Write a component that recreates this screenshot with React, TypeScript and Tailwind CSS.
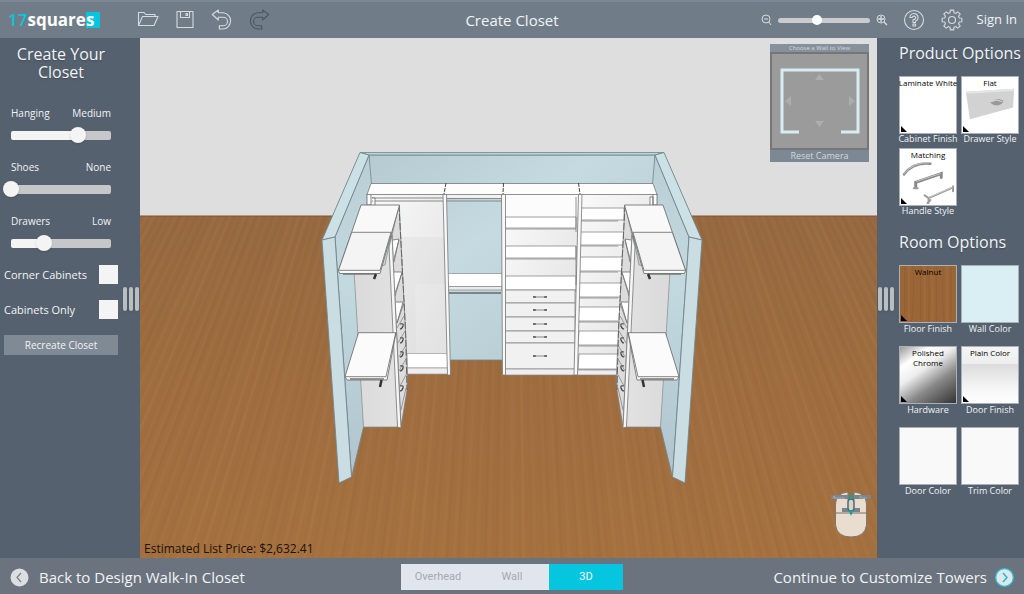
import { useState, type ReactNode } from 'react';
import clsx from 'clsx';

const floorLines = Array.from({ length: 420 }, (_, i) => ({
    x: -340 + i * 4,
    opacity: [0.04, 0.02, 0.07, 0.03, 0.01, 0.05, 0.02][(i * 5 + (i % 11)) % 7],
    color: i % 3 === 0 ? '#d8a066' : '#5f3c1c',
}));

const drawers = [
    { y: 290, h: 13, pull: 297 },
    { y: 303, h: 14, pull: 310 },
    { y: 317, h: 14, pull: 324 },
    { y: 331, h: 12, pull: 337 },
    { y: 343, h: 26, pull: 356 },
];

const towerShelves = [
    [217, 228],
    [246, 258],
    [276, 290],
];

const rightShelves = [
    [208, 220],
    [232, 245],
    [257, 271],
    [283, 297],
    [307, 321],
    [331, 345],
    [354, 369],
];

function WingWall() {
    return <path d="M335 237L369 155L372 190L380 427H363.5L351.5 477Z" fill="url(#innerWall)" stroke="#71868c" strokeWidth=".8" />;
}

function Wing() {
    return (
        <g strokeLinejoin="round">
            <path d="M354 271L385 265L391 236L398 427H363.5Z" fill="url(#sidePanel)" stroke="#888" strokeWidth=".7" />
            <path d="M399 205L405 320L407.5 372L407 390L401 427L392 235Z" fill="#dcdcdc" stroke="#777" strokeWidth=".7" />
            <path d="M393 240L399 239L394 262M394 272H402L395 296M396 302H403L397 323" fill="#fff" stroke="#6b6b6b" strokeWidth=".8" />
            <path d="M397 323L404 303M394 296L402 273M393 262L399 240" stroke="#777" strokeWidth=".8" />
            <path d="M397 328L404 316M398 343L405 331M399 357L406 345M399 371L406 359M400 386L407 373M401 410L406 388" stroke="#888" strokeWidth=".8" />
            <path d="M389 247L392 235L401 428L397.5 427Z" fill="#f6f6f6" stroke="#777" strokeWidth=".8" />
            <path d="M399 205L405.5 330L407 390" fill="none" stroke="#666" strokeWidth="1" strokeDasharray="7 2" />
            {[326, 340, 354, 368, 388].map((y) => (
                <path key={y} d={`M400 ${y - 2}q4 -1 3 2t-3 3`} fill="none" stroke="#444" strokeWidth="1.2" />
            ))}
            <path d="M361 205H399.5L380 273.5H339.5L338.5 270.5Z" fill="#f9f9f9" stroke="#666" strokeWidth=".8" />
            <path d="M351.7 232.3H391L380 270.3H338.5Z" fill="#f4f4f4" stroke="#666" strokeWidth=".8" />
            <path d="M343 274H376" stroke="#777" strokeWidth="1.5" />
            <path d="M376 274L374 279" stroke="#333" strokeWidth="2.5" />
            <path d="M358.5 332.7H396L387 380H347L345 376.7Z" fill="#fbfbfb" stroke="#666" strokeWidth=".8" />
            <path d="M345 376.7H386L395.7 333" fill="none" stroke="#666" strokeWidth=".8" />
            <path d="M350 379H384" stroke="#777" strokeWidth="1.5" />
            <path d="M381.5 380L380 387" stroke="#333" strokeWidth="2.5" />
            <path d="M360 152.5L369 155L335 237L322 240Z" fill="#cbe1e6" stroke="#71868c" strokeWidth=".9" />
            <path d="M322 240L335 237L351.5 477L339 483Z" fill="#c9dde2" stroke="#71868c" strokeWidth=".9" />
        </g>
    );
}

function ClosetScene() {
    return (
        <svg className="absolute inset-0 h-full w-full" viewBox="140 38 737 520" preserveAspectRatio="xMidYMid slice" aria-hidden="true">
            <defs>
                <linearGradient id="floor" x1="0" y1="216" x2="0" y2="560" gradientUnits="userSpaceOnUse">
                    <stop offset="0" stopColor="#996b42" />
                    <stop offset="1" stopColor="#a67240" />
                </linearGradient>
                <linearGradient id="backWall" x1="0" y1="0" x2="1" y2="1">
                    <stop offset="0" stopColor="#b5cad1" />
                    <stop offset=".4" stopColor="#c5dbe1" />
                    <stop offset="1" stopColor="#b0c6cd" />
                </linearGradient>
                <linearGradient id="innerWall" x1="0" y1="0" x2="0" y2="1">
                    <stop offset="0" stopColor="#b9ced5" />
                    <stop offset=".4" stopColor="#c3d9e0" />
                    <stop offset="1" stopColor="#afc4cc" />
                </linearGradient>
                <linearGradient id="sidePanel" x1="0" y1="0" x2="1" y2="0">
                    <stop offset="0" stopColor="#dadada" />
                    <stop offset="1" stopColor="#e2e2e2" />
                </linearGradient>
                <linearGradient id="backPanel" x1="0" y1="0" x2="1" y2="1">
                    <stop offset="0" stopColor="#fafafa" />
                    <stop offset="1" stopColor="#dfdfdf" />
                </linearGradient>
                <clipPath id="floorClip">
                    <rect x="-300" y="216" width="1600" height="800" />
                </clipPath>
            </defs>

            <rect x="-300" y="-400" width="1600" height="620" fill="#dedede" />
            <rect x="-300" y="216" width="1600" height="800" fill="url(#floor)" />
            <g clipPath="url(#floorClip)">
                {floorLines.map((line) => (
                    <path key={line.x} d={`M512 -450L${line.x} 600`} stroke={line.color} strokeOpacity={line.opacity} strokeWidth="3" />
                ))}
            </g>
            <path d="M-300 216H1300" stroke="#7c5637" />

            {/* walls */}
            <path d="M369 155H655L651 360H373Z" fill="url(#backWall)" stroke="#71868c" strokeWidth=".8" />
            <path d="M360 152.5H664L655 155H369Z" fill="#b9d3da" stroke="#71868c" strokeWidth=".8" />
            <WingWall />
            <g transform="translate(1024 0) scale(-1 1)">
                <WingWall />
            </g>

            {/* hanging section */}
            <path d="M368 195H444L449 374H407L400 205H368Z" fill="url(#backPanel)" />
            <path d="M396 237H446L449 353H405Z" fill="#d4d4d4" fillOpacity=".25" />
            <path d="M415 284H447L449 353H416Z" fill="#fff" fillOpacity=".15" />
            <path d="M407 353.5H448V368H407Z" fill="#fff" stroke="#999" strokeWidth=".7" />
            <path d="M407 368H448V374H407Z" fill="#eee" stroke="#999" strokeWidth=".7" />
            <path d="M372 198H443M372 201H443" stroke="#888" strokeWidth="1.2" />
            <path d="M367 194H371V205H367ZM372 198h3v7" fill="#fff" stroke="#666" strokeWidth=".8" />

            {/* double hang */}
            <path d="M446 194H502V199H446Z" fill="#f2f2f2" />
            <path d="M446 198.5H502M446 201H502" stroke="#888" strokeWidth="1.2" />
            <path d="M447 273.5H502V286.5H447Z" fill="#fff" stroke="#888" strokeWidth=".7" />
            <path d="M447 286.5H502V290H447Z" fill="#e9e9e9" stroke="#888" strokeWidth=".7" />
            <path d="M449 293H501" stroke="#78868a" strokeWidth="2" />

            {/* drawer tower */}
            <path d="M505 194H579L575 375H505Z" fill="url(#backPanel)" />
            <path d="M505 195H578V217H505Z" fill="#fcfcfc" />
            {towerShelves.map(([top, front]) => (
                <g key={top} stroke="#888" strokeWidth=".8">
                    <path d={`M505 ${top}H576V${front}H505Z`} fill="#fff" />
                    <path d={`M505 ${front + 1}H576`} />
                </g>
            ))}
            {drawers.map((d) => (
                <g key={d.y}>
                    <rect x="505" y={d.y} width="70" height={d.h} fill="#f1f1f1" stroke="#888" strokeWidth=".8" />
                    <path d={`M533 ${d.pull}h3m8 0h3`} stroke="#444" strokeWidth="1.6" />
                    <path d={`M535 ${d.pull}h10`} stroke="#888" strokeWidth="1" />
                </g>
            ))}
            <path d="M505 369H575V375H505Z" fill="#eee" stroke="#888" strokeWidth=".7" />

            {/* shoe shelves */}
            <path d="M581 194H656V205L625 210L617 375H576Z" fill="url(#backPanel)" />
            {rightShelves.map(([top, front]) => (
                <g key={top} stroke="#888" strokeWidth=".8">
                    <path d={`M579 ${top}H624L${625 - (front - 200) / 24} ${front}H578Z`} fill="#fff" />
                    <path d={`M578 ${front + 1}H618`} />
                </g>
            ))}
            <path d="M577 370H620V375H577Z" fill="#eee" stroke="#888" strokeWidth=".7" />
            <path d="M650 205v-8h3v8M653 194h4v11h-4z" fill="#fff" stroke="#666" strokeWidth=".8" />

            {/* posts and top */}
            <g fill="#f9f9f9" stroke="#777" strokeWidth=".8">
                <path d="M443 194H446.5L450.5 375H447.5Z" />
                <path d="M501.5 194H505.5V375H502.5Z" />
                <path d="M578.5 194H582L577.5 375H574Z" />
                <path d="M576 197V232M576 246V285" fill="none" />
            </g>
            <path d="M371 183.5H653L657 194.5H367Z" fill="#fdfdfd" stroke="#777" strokeWidth=".8" />
            <path d="M446 183L444 194M503.5 183L503 194M578.5 183L580 194" stroke="#444" strokeWidth="1" strokeDasharray="4 1" />

            <Wing />
            <g transform="translate(1024 0) scale(-1 1)">
                <Wing />
            </g>
        </svg>
    );
}

function HeaderIcon({ label, disabled, children }: { label: string; disabled?: boolean; children: ReactNode }) {
    return (
        <button type="button" aria-label={label} className={clsx('flex w-5 justify-center', disabled ? 'text-[#50565c]' : 'text-[#d5dade]')}>
            <svg className="h-[22px] w-[22px] shrink-0" viewBox="0 0 22 22" fill="none" stroke="currentColor" strokeWidth="1.1" strokeLinejoin="round" strokeLinecap="round">
                {children}
            </svg>
        </button>
    );
}

const undoPath = 'M1.3 5.5L7.3 1V3.7H12.3A8.2 8.2 0 0 1 12.3 20H8.3V16.7H12.3A4.2 4.2 0 0 0 12.3 8.3H7.3V11Z';

function gearPath() {
    const points: string[] = [];
    for (let i = 0; i < 8; i++) {
        const a = (i * Math.PI) / 4;
        [[-0.26, 7.6], [-0.17, 10], [0.17, 10], [0.26, 7.6]].forEach(([off, r]) => {
            points.push(`${(11 + r * Math.sin(a + off)).toFixed(2)} ${(11 - r * Math.cos(a + off)).toFixed(2)}`);
        });
    }
    return `M${points.join('L')}Z`;
}

function Magnifier({ plus }: { plus?: boolean }) {
    return (
        <svg className="h-3 w-3" viewBox="0 0 12 12" fill="none" stroke="#d5dade" strokeWidth="1">
            {plus ? <circle cx="5" cy="5" r="4" /> : <circle cx="6" cy="5" r="4" />}
            {plus ? <path d="M5 2V8M2 5H8M8 8L11 11" strokeWidth="1.4" /> : <path d="M4 5H8M9 8L11 11" />}
        </svg>
    );
}

function Header() {
    const [zoom, setZoom] = useState(42);

    return (
        <header className="grid h-[38px] shrink-0 grid-cols-[1fr_auto_1fr] items-center border-t-2 border-[#7c8995] bg-[#707d89] px-[7px]">
            <div className="flex items-center pl-px">
                <a href="#home" className="flex w-[92px] items-center text-[17px] leading-[18px]">
                    <span className="font-semibold text-[#05c5df]">17</span>
                    <span className="font-bold text-white">square</span>
                    <span className="h-4 w-[14px] bg-[#05c5df] font-bold leading-[15px] text-white">s</span>
                </a>
                <div className="ml-[38px] flex items-center gap-[17px]">
                    <HeaderIcon label="Open">
                        <path d="M1.5 16.5V3.5H7L8.7 5.5H18V7.5M1.5 16.5L5.5 7.5H21L17 16.5H1.5" />
                    </HeaderIcon>
                    <HeaderIcon label="Save">
                        <path d="M3 2.5H19V18.5H3ZM6.5 2.5V8.5H15.5V2.5M12 4.5H13.5V6.5H12Z" />
                    </HeaderIcon>
                    <HeaderIcon label="Undo">
                        <path d={undoPath} />
                    </HeaderIcon>
                    <HeaderIcon label="Redo" disabled>
                        <path d={undoPath} transform="translate(22 0) scale(-1 1)" />
                    </HeaderIcon>
                </div>
            </div>
            <h1 className="text-[15px] leading-6">Create Closet</h1>
            <div className="flex items-center justify-end">
                <Magnifier />
                <div className="relative mx-1 flex h-3 w-[96px] items-center">
                    <div className="absolute inset-x-0.5 h-[5px] rounded-full bg-[#c9cbcd]" />
                    <input
                        type="range"
                        aria-label="Zoom"
                        value={zoom}
                        onChange={(e) => setZoom(Number(e.target.value))}
                        className="relative m-0 w-full appearance-none bg-transparent [&::-webkit-slider-thumb]:h-2.5 [&::-webkit-slider-thumb]:w-2.5 [&::-webkit-slider-thumb]:appearance-none [&::-webkit-slider-thumb]:rounded-full [&::-webkit-slider-thumb]:bg-white"
                    />
                </div>
                <Magnifier plus />
                <div className="ml-4 mr-[15px] flex gap-[18px]">
                    <HeaderIcon label="Help">
                        <circle cx="11" cy="11" r="9.5" />
                        <path d="M7 8.5A4 4 0 1 1 12.5 12.2V13.5H10V10.7C12 10.5 13 9.8 12.7 8.3C12.3 6.7 9.5 6.8 9.3 8.5ZM10 15H12.5V17H10Z" />
                    </HeaderIcon>
                    <HeaderIcon label="Settings">
                        <path d={gearPath()} />
                        <circle cx="11" cy="11" r="3.5" />
                    </HeaderIcon>
                </div>
                <a href="#sign-in" className="text-[13px] whitespace-nowrap">Sign In</a>
            </div>
        </header>
    );
}

const levels = [
    { id: 'hanging', label: 'Hanging', names: ['None', 'Low', 'Medium', 'High'], value: 2 },
    { id: 'shoes', label: 'Shoes', names: ['None', 'Low', 'Medium', 'High'], value: 0 },
    { id: 'drawers', label: 'Drawers', names: ['None', 'Low', 'Medium', 'High'], value: 1 },
];

function LevelSlider({ id, label, names, value }: (typeof levels)[number]) {
    const [level, setLevel] = useState(value);
    const percent = (level / 3) * 100;

    return (
        <div className="h-[54px] px-[3px]">
            <div className="flex justify-between px-2 text-[10px] leading-4">
                <label htmlFor={id}>{label}</label>
                <output htmlFor={id}>{names[level]}</output>
            </div>
            <div className="relative mt-1.5 flex h-4 items-center">
                <div
                    className="absolute inset-x-2 h-[9px] rounded-xs"
                    style={{ background: `linear-gradient(to right, #f4f4f4 ${percent}%, #c6c7c8 ${percent}%)` }}
                />
                <input
                    id={id}
                    type="range"
                    min={0}
                    max={3}
                    value={level}
                    onChange={(e) => setLevel(Number(e.target.value))}
                    className="relative m-0 w-full appearance-none bg-transparent [&::-webkit-slider-thumb]:h-4 [&::-webkit-slider-thumb]:w-4 [&::-webkit-slider-thumb]:appearance-none [&::-webkit-slider-thumb]:rounded-full [&::-webkit-slider-thumb]:bg-[#f4f4f4] [&::-webkit-slider-thumb]:shadow"
                />
            </div>
        </div>
    );
}

function Grip({ label }: { label: string }) {
    return (
        <button type="button" aria-label={label} className="flex w-[18px] shrink-0 items-center justify-center gap-0.5 pt-0.5">
            <span className="h-6 w-1 rounded-full bg-[#b9bec3] shadow" />
            <span className="h-6 w-1 rounded-full bg-[#b9bec3] shadow" />
            <span className="h-6 w-1 rounded-full bg-[#b9bec3] shadow" />
        </button>
    );
}

function CheckRow({ id, label }: { id: string; label: string }) {
    return (
        <div className="flex items-start justify-between px-1">
            <label htmlFor={id} className="text-[11px] leading-[19px]">{label}</label>
            <input id={id} type="checkbox" className="h-[19px] w-[19px] appearance-none bg-[#f4f4f4] checked:bg-[#05c5df]" />
        </div>
    );
}

function LeftPanel() {
    return (
        <aside className="flex w-[140px] shrink-0 bg-[#55616e]">
            <div className="min-w-0 flex-1">
                <h2 className="px-2 pt-[7px] text-center text-[16px] leading-[18px] text-shadow-sm">Create Your Closet</h2>
                <div className="pt-6">
                    {levels.map((level) => (
                        <LevelSlider key={level.id} {...level} />
                    ))}
                </div>
                <div className="-mt-0.5 flex flex-col gap-4">
                    <CheckRow id="corner" label="Corner Cabinets" />
                    <CheckRow id="cabinets" label="Cabinets Only" />
                    <div className="px-1">
                        <button type="button" className="block h-5 w-full bg-[#808a95] text-[10px] leading-5">Recreate Closet</button>
                    </div>
                </div>
            </div>
            <Grip label="Collapse closet panel" />
        </aside>
    );
}

function CameraPad() {
    return (
        <div className="absolute right-2 top-1.5 flex w-[99px] flex-col text-center text-[#d3d7db]">
            <p className="h-2 bg-[#87919b] text-[6px] leading-2">Choose a Wall to View</p>
            <svg className="block w-full border-2 border-[#747678] bg-[#9b9b9b]" viewBox="0 0 95 94" fill="none" aria-hidden="true">
                <path d="M27 78H10V16H86V78H69" stroke="#d8edf1" strokeWidth="3" />
                <path d="M47.5 20L52 26H43ZM47.5 73L52 67H43ZM13 47L19 42V52ZM83 47L77 42V52Z" fill="#adadad" />
            </svg>
            <button type="button" className="h-3 bg-[#7c8894] text-[9px] leading-3">Reset Camera</button>
        </div>
    );
}

function MouseHint() {
    return (
        <svg className="absolute bottom-[19px] right-1.5 h-12 w-10" viewBox="0 0 40 48" aria-hidden="true">
            <path d="M4.5 13Q5 2 17 1V9H23V1Q35 2 35.5 13V34Q34 46 20 46Q6 46 4.5 34Z" fill="#e9ddd0" stroke="#7d7871" />
            <path d="M4.5 22H35.5M20 1V22" stroke="#77736d" />
            <path d="M0 4H17V8H0ZM23 4H40V8H23ZM11 17H29V21H11Z" fill="#7b858e" />
            <rect x="17" y="8" width="6" height="12" rx="3" fill="#d9d2c8" stroke="#4f6a70" strokeWidth="1.5" />
            <path d="M20 2L22.5 8H17.5ZM20 25L22.5 19H17.5Z" fill="#1f9a98" />
            <g fill="#b9c0c5" fontSize="4" textAnchor="middle">
                <text x="8" y="7.5">Rotate</text>
                <text x="32" y="7.5">Pan</text>
            </g>
        </svg>
    );
}

type Option = { name: string; value?: string; swatch: string; art?: ReactNode; menu?: boolean };

const drawerArt = (
    <svg className="absolute inset-0 h-full w-full" viewBox="0 0 57 57" aria-hidden="true">
        <path d="M4 15L53 12L52 31L8 43Z" fill="#d2d2d2" />
        <path d="M4 15L53 12L52.5 14L5 17Z" fill="#e5e5e5" />
        <path d="M29 26Q35 20 42 24Q42 28 36 29Q31 29 29 26Z" fill="#999" />
        <path d="M30 25Q35 22 41 25" stroke="#ddd" fill="none" />
    </svg>
);

const handleArt = (
    <svg className="absolute inset-0 h-full w-full" viewBox="0 0 57 57" fill="none" strokeLinecap="round" aria-hidden="true">
        <path d="M4 26Q13 13 31 15" stroke="#8d8d8d" strokeWidth="2.5" />
        <path d="M4 25Q14 13 29 14" stroke="#c9c9c9" />
        <path d="M16 39V34L42 25V29" stroke="#888" strokeWidth="3" />
        <path d="M17 33L41 25" stroke="#c4c4c4" />
        <path d="M14 40H18M28 55L31 52M25 47L29 50L54 39M29 50V55M54 38V43" stroke="#9a9a9a" strokeWidth="2" />
        <path d="M30 49L53 39" stroke="#ccc" />
    </svg>
);

const walnutArt = (
    <svg className="absolute inset-0 h-full w-full" viewBox="0 0 57 57" fill="none" aria-hidden="true">
        <path d="M5 0V57M13 0Q15 30 12 57M21 0V57M28 0Q31 28 29 57M37 0V57M44 0Q42 30 45 57M52 0V57" stroke="#754820" strokeOpacity=".2" />
        <path d="M9 0V57M25 0V57M33 0V57M48 0V57" stroke="#b97e48" strokeOpacity=".25" strokeWidth="2" />
    </svg>
);

const productOptions: Option[] = [
    { name: 'Cabinet Finish', value: 'Laminate White', swatch: 'bg-white', menu: true },
    { name: 'Drawer Style', value: 'Flat', swatch: 'bg-white', art: drawerArt, menu: true },
    { name: 'Handle Style', value: 'Matching', swatch: 'bg-white', art: handleArt, menu: true },
];

const roomOptions: Option[] = [
    { name: 'Floor Finish', value: 'Walnut', swatch: 'bg-[#9a6638]', art: walnutArt, menu: true },
    { name: 'Wall Color', swatch: 'bg-[#d9eff4]' },
    { name: 'Hardware', value: 'Polished Chrome', swatch: 'bg-[linear-gradient(145deg,#999_0%,#fff_22%,#eee_40%,#888_65%,#333_100%)]', menu: true },
    { name: 'Door Finish', value: 'Plain Color', swatch: 'bg-[linear-gradient(#f4f4f4_0%,#eee_30%,#dcdcdc_31%,#f6f6f6_75%,#fff_100%)]', menu: true },
    { name: 'Door Color', swatch: 'bg-[#f9f9f9]' },
    { name: 'Trim Color', swatch: 'bg-[#f9f9f9]' },
];

function OptionTile({ option, roomy }: { option: Option; roomy?: boolean }) {
    return (
        <button type="button" className={clsx('flex w-[58px] flex-col items-center', roomy ? 'h-[81px]' : 'h-[72px]')}>
            <span className={clsx('relative block h-[58px] w-full shrink-0 border border-[#a9b1b8] text-[8px] leading-[10px] text-black', option.swatch)}>
                {option.art}
                {option.value && (
                    <span className={clsx('relative flex justify-center pt-px text-center', option.value === 'Laminate White' && 'whitespace-nowrap')}>{option.value}</span>
                )}
                {option.menu && (
                    <svg className="absolute bottom-px left-px h-1.5 w-1.5" viewBox="0 0 6 6" aria-hidden="true">
                        <path d="M0 0L6 6H0Z" fill="#000" />
                    </svg>
                )}
            </span>
            <span className={clsx('text-[9px] leading-[10px] whitespace-nowrap', roomy && 'pt-px')}>{option.name}</span>
        </button>
    );
}

function RightPanel() {
    return (
        <aside className="flex w-[147px] shrink-0 bg-[#55616e]">
            <Grip label="Collapse options panel" />
            <div className="min-w-0 flex-1 pl-1">
                <h2 className="pt-[3px] text-[16px] leading-6 whitespace-nowrap text-shadow-sm">Product Options</h2>
                <div className="mt-[11px] grid grid-cols-[58px_58px] gap-x-1">
                    {productOptions.map((option) => (
                        <OptionTile key={option.name} option={option} />
                    ))}
                </div>
                <h2 className="mt-[10px] text-[16px] leading-6 whitespace-nowrap text-shadow-sm">Room Options</h2>
                <div className="mt-[11px] grid grid-cols-[58px_58px] gap-x-1">
                    {roomOptions.map((option) => (
                        <OptionTile key={option.name} option={option} roomy />
                    ))}
                </div>
            </div>
        </aside>
    );
}

const views = ['Overhead', 'Wall', '3D'];

function Footer() {
    const [view, setView] = useState('3D');

    return (
        <footer className="grid h-9 shrink-0 grid-cols-[1fr_auto_1fr] items-center bg-[#6b747e] px-2.5 pt-0.5 text-[15px] leading-6">
            <a href="#back" className="flex items-center gap-2.5 whitespace-nowrap">
                <svg className="h-[19px] w-[19px]" viewBox="0 0 19 19" fill="none" aria-hidden="true">
                    <circle cx="9.5" cy="9.5" r="9" fill="#dcdee2" />
                    <path d="M11 5L7 9.5L11 14" stroke="#777f88" strokeWidth="1.2" />
                </svg>
                Back to Design Walk-In Closet
            </a>
            <div className="flex h-[26px] font-[Roboto,sans-serif] text-[11px]">
                {views.map((name) => (
                    <button
                        key={name}
                        type="button"
                        aria-pressed={view === name}
                        onClick={() => setView(name)}
                        className={clsx('w-[74px]', view === name ? 'bg-[#05c5df] text-white' : 'bg-[#e1e6ee] text-[#a4a9af]')}
                    >
                        {name}
                    </button>
                ))}
            </div>
            <a href="#continue" className="flex items-center justify-end gap-2 whitespace-nowrap">
                Continue to Customize Towers
                <svg className="h-[19px] w-[19px]" viewBox="0 0 19 19" fill="none" aria-hidden="true">
                    <circle cx="9.5" cy="9.5" r="8.8" fill="#dfe7eb" stroke="#27c5da" strokeWidth="1.2" />
                    <path d="M8 5L12 9.5L8 14" stroke="#22b9d2" strokeWidth="1.5" />
                </svg>
            </a>
        </footer>
    );
}

export default function App() {
    return (
        <div className="flex min-h-screen flex-col overflow-hidden font-['Open_Sans',sans-serif] text-[#f1f3f5]">
            <Header />
            <div className="flex flex-1">
                <LeftPanel />
                <main className="relative min-w-0 flex-1 overflow-hidden">
                    <ClosetScene />
                    <CameraPad />
                    <MouseHint />
                    <p className="absolute bottom-0 left-1 text-[12px] leading-[18px] text-[#1b130b]">Estimated List Price: $2,632.41</p>
                </main>
                <RightPanel />
            </div>
            <Footer />
        </div>
    );
}
